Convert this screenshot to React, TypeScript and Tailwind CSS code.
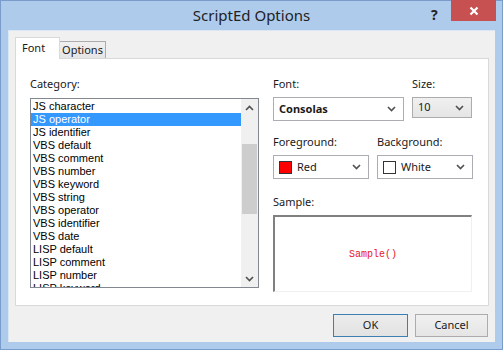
import { ReactNode } from 'react';

const ui = { fontFamily: '"Noto Sans", "Open Sans", sans-serif' };
const list = { fontFamily: '"Liberation Sans", Arial, sans-serif' };

const categories = [
  'JS character',
  'JS operator',
  'JS identifier',
  'VBS default',
  'VBS comment',
  'VBS number',
  'VBS keyword',
  'VBS string',
  'VBS operator',
  'VBS identifier',
  'VBS date',
  'LISP default',
  'LISP comment',
  'LISP number',
  'LISP keyword',
];

function Chevron({ up = false }: { up?: boolean }) {
  return (
    <svg width="9" height="6" viewBox="0 0 9 6" className="shrink-0">
      <path
        d={up ? 'M1 5L4.5 1.5L8 5' : 'M1 1L4.5 4.5L8 1'}
        stroke="#505050"
        strokeWidth="1.6"
        fill="none"
      />
    </svg>
  );
}

function Combo({
  children,
  className = '',
  gray = false,
}: {
  children: ReactNode;
  className?: string;
  gray?: boolean;
}) {
  return (
    <div
      className={`flex items-center justify-between border pl-[5px] pr-[7px] ${
        gray
          ? 'border-[#acacac] bg-gradient-to-b from-[#f0f0f0] to-[#e5e5e5]'
          : 'border-[#abadb3] bg-white'
      } ${className}`}
    >
      <div className="flex items-center gap-[5px] text-[11px] text-[#1a1a1a]">{children}</div>
      <Chevron />
    </div>
  );
}

function Label({ children }: { children: ReactNode }) {
  return <div className="text-[11px] leading-[15px] text-[#1a1a1a]">{children}</div>;
}

export default function App() {
  return (
    <div
      className="flex h-[350px] w-[503px] flex-col border border-[#7a9ccc] bg-[#aecbec]"
      style={ui}
    >
      {/* title bar */}
      <div className="relative flex h-[29px] items-center justify-center">
        <span className="text-[15px] text-[#222]">ScriptEd Options</span>
        <span className="absolute left-[430px] top-[3px] text-[14px] font-bold text-[#222]">?</span>
        <div className="absolute right-[6px] top-[-1px] flex h-[21px] w-[45px] items-center justify-center bg-[#c75050]">
          <svg width="10" height="10" viewBox="0 0 10 10">
            <path d="M1.5 1.5L8.5 8.5M8.5 1.5L1.5 8.5" stroke="white" strokeWidth="2.2" />
          </svg>
        </div>
      </div>

      {/* client area */}
      <div className="mx-[7px] mb-[7px] flex flex-1 flex-col border-l border-t border-[#dbe6f3] bg-[#f0f0f0] px-[6px] pt-[6px]">
        {/* tabs */}
        <div className="flex items-end">
          <div className="z-10 -mb-px flex h-[22px] w-[45px] items-start border border-b-0 border-[#d9d9d9] bg-white pl-[6px] pt-[2px] text-[11px] text-[#1a1a1a]">
            Font
          </div>
          <div className="flex h-[17px] w-[46px] items-center justify-center border border-b-0 border-l-0 border-[#acacac] bg-gradient-to-b from-[#f0f0f0] to-[#e5e5e5] text-[11px] text-[#1a1a1a]">
            Options
          </div>
        </div>

        {/* panel */}
        <div className="flex h-[248px] w-[474px] gap-[14px] border border-[#d9d9d9] bg-white pl-[14px] pt-[17px]">
          {/* category */}
          <div className="flex flex-col">
            <div className="h-[22px]">
              <Label>Category:</Label>
            </div>
            <div className="flex h-[190px] w-[229px] border border-[#828790] bg-white">
              <div className="flex-1 overflow-hidden pt-px" style={list}>
                {categories.map((c) => (
                  <div
                    key={c}
                    className={`h-[13px] pl-[2px] text-[11px] leading-[13px] ${
                      c === 'JS operator' ? 'bg-[#3399ff] text-white' : 'text-black'
                    }`}
                  >
                    {c}
                  </div>
                ))}
              </div>
              <div className="flex w-[17px] flex-col items-center bg-[#f0f0f0]">
                <div className="flex h-[17px] items-center justify-center">
                  <Chevron up />
                </div>
                <div className="mt-[28px] h-[70px] w-[15px] bg-[#cdcdcd]" />
                <div className="flex-1" />
                <div className="flex h-[17px] items-center justify-center">
                  <Chevron />
                </div>
              </div>
            </div>
          </div>

          {/* right column */}
          <div className="flex w-[199px] flex-col">
            <div className="flex gap-[8px]">
              <div className="flex flex-col">
                <div className="h-[21px]">
                  <Label>Font:</Label>
                </div>
                <Combo className="h-[24px] w-[131px]">
                  <span className="font-bold">Consolas</span>
                </Combo>
              </div>
              <div className="flex flex-col">
                <div className="h-[21px]">
                  <Label>Size:</Label>
                </div>
                <Combo gray className="h-[21px] w-[60px]">
                  10
                </Combo>
              </div>
            </div>

            <div className="mt-[13px] flex gap-[8px]">
              <div className="flex flex-col">
                <div className="h-[21px]">
                  <Label>Foreground:</Label>
                </div>
                <Combo className="h-[24px] w-[96px]">
                  <span className="h-[13px] w-[13px] border border-[#333] bg-[#ff0000]" />
                  <span>Red</span>
                </Combo>
              </div>
              <div className="flex flex-col">
                <div className="h-[21px]">
                  <Label>Background:</Label>
                </div>
                <Combo className="h-[24px] w-[96px]">
                  <span className="h-[13px] w-[13px] border border-[#333] bg-white" />
                  <span>White</span>
                </Combo>
              </div>
            </div>

            <div className="mt-[15px] h-[21px]">
              <Label>Sample:</Label>
            </div>
            <div className="flex h-[77px] w-[199px] items-center justify-center border-2 border-b border-r border-b-[#f0f0f0] border-l-[#808080] border-r-[#f0f0f0] border-t-[#808080] bg-white">
              <span
                className="text-[10px] text-[#e8141e]"
                style={{ fontFamily: '"Liberation Mono", "DejaVu Sans Mono", monospace' }}
              >
                Sample()
              </span>
            </div>
          </div>
        </div>

        {/* buttons */}
        <div className="mt-[8px] flex justify-end gap-[7px] pr-[1px]">
          <button className="h-[23px] w-[75px] border border-[#3c7fb1] bg-gradient-to-b from-[#ececec] to-[#e2e2e2] text-[11px] text-[#1a1a1a]">
            OK
          </button>
          <button className="h-[23px] w-[73px] border border-[#acacac] bg-gradient-to-b from-[#f0f0f0] to-[#e5e5e5] text-[11px] text-[#1a1a1a]">
            Cancel
          </button>
        </div>
      </div>
    </div>
  );
}
